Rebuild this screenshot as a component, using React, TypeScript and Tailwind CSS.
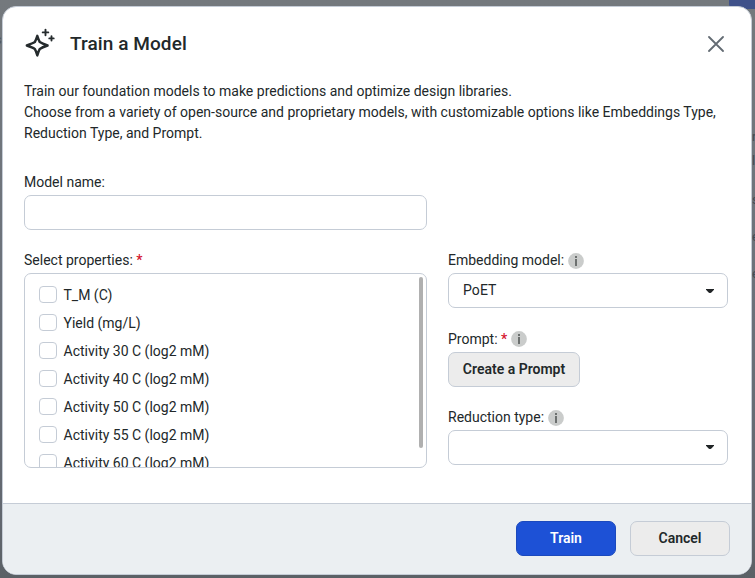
import React from "react";

const properties = [
  "T_M (C)",
  "Yield (mg/L)",
  "Activity 30 C (log2 mM)",
  "Activity 40 C (log2 mM)",
  "Activity 50 C (log2 mM)",
  "Activity 55 C (log2 mM)",
  "Activity 60 C (log2 mM)",
];

function Sparkles() {
  return (
    <svg width="32" height="32" viewBox="0 0 32 32" fill="none" stroke="#252b2d" strokeLinecap="round" strokeLinejoin="round">
      <path d="M13.3 7.8 C14 10 14.8 12.2 15.8 14.1 C17.8 15.4 21 16.6 23.6 17.5 C21 18.4 17.8 19.6 15.8 20.9 C14.8 22.7 14 25 13.3 27.4 C12.6 25 11.8 22.7 10.8 20.9 C8.8 19.6 5.4 18.4 2.8 17.5 C5.4 16.6 8.8 15.4 10.8 14.1 C11.8 12.2 12.6 10 13.3 7.8 Z" strokeWidth="2.4" />
      <path d="M21.5 1.6 V7.2 M18.7 4.4 H24.3 M27.5 8.2 V12.6 M25.3 10.4 H29.7" strokeWidth="1.9" />
    </svg>
  );
}

function Info() {
  return (
    <svg width="16" height="16" viewBox="0 0 16 16">
      <circle cx="8" cy="8" r="7.9" fill="#cacccb" />
      <rect x="7" y="3" width="2" height="2" fill="#6c706f" />
      <rect x="7" y="6" width="2" height="7" fill="#6c706f" />
    </svg>
  );
}

function Label({ children, required, info }: { children: React.ReactNode; required?: boolean; info?: boolean }) {
  return (
    <div className="flex h-[26px] items-center">
      <span>{children}</span>
      {required && <span className="ml-[3.5px] font-medium text-[#d5152e]">*</span>}
      {info && <span className={required ? "ml-[3.5px]" : "ml-1 mt-[2px]"}><Info /></span>}
    </div>
  );
}

function Select({ value }: { value?: string }) {
  return (
    <div className="flex h-[35px] w-[280px] items-center justify-between rounded-[7px] border border-[#c5ccd6] bg-white pl-[14px] pr-[13px]">
      <span className="tracking-[0.1px]">{value}</span>
      <svg width="8" height="4" viewBox="0 0 8 4" className={value ? "" : "mb-[2px]"}>
        <path d="M0 0 H8 V.8 L5.4 3.6 Q4 4.5 2.6 3.6 L0 .8 Z" fill="#202426" />
      </svg>
    </div>
  );
}

export default function App() {
  return (
    <div className="relative h-[578px] w-[755px] overflow-hidden bg-[linear-gradient(180deg,#74797d_0%,#6c727b_50%,#62676f_90%,#5b6166_100%)] font-['Roboto','Liberation_Sans',sans-serif] text-[14px] leading-[21px] text-[#22282a]">
      <div className="absolute left-[729px] top-0 h-[9px] w-[26px] rounded-bl-[5px] bg-[#40528a]" />
      <span className="absolute -left-[5px] top-[29px] text-[13px] text-[#50565b]">s</span>
      <div className="absolute left-[752px] top-[127px] flex flex-col text-[13px] leading-[20px] text-[#454b53]">
        <span className="h-[24px]">r</span>
        <span className="h-[39px]">l</span>
        <span className="h-[37px]">s</span>
        <span className="h-[37px]">e</span>
        <span>e</span>
      </div>
      <div className="relative ml-[2px] mt-[6px] flex h-[569px] w-[750px] flex-col overflow-hidden rounded-[14px] border border-[#c5ccd6] bg-white">
        <header className="flex h-[74px] items-center justify-between pl-[21px] pr-[27px]">
          <div className="flex items-center">
            <Sparkles />
            <h1 className="ml-[14px] text-[19px] font-medium leading-[24px] tracking-[0.08px]">Train a Model</h1>
          </div>
          <svg width="16" height="16" viewBox="0 0 16 16" stroke="#636b73" strokeWidth="1.8" strokeLinecap="round">
            <path d="M1 1 L15 15 M15 1 L1 15" />
          </svg>
        </header>
        <main className="flex grow flex-col px-[21px]">
          <p className="whitespace-nowrap">
            Train our foundation models to make predictions and optimize design libraries.<br />
            Choose from a variety of open-source and proprietary models, with customizable options like Embeddings Type,<br />
            Reduction Type, and Prompt.
          </p>
          <div className="mt-[25px] w-[403px]">
            <Label>Model name:</Label>
            <div className="h-[35px] rounded-[7px] border border-[#c5ccd6]" />
          </div>
          <div className="mt-[17px] flex gap-[21px]">
            <section className="w-[403px]">
              <Label required>Select properties:</Label>
              <div className="flex h-[195px] justify-between overflow-hidden rounded-[7px] border border-[#c5ccd6] pl-[14px] pr-[3px]">
                <div className="flex flex-col pt-[7px]">
                  {properties.map((p) => (
                    <div key={p} className="flex h-[28px] shrink-0 items-center">
                      <span className="mb-[2px] h-[17px] w-[18px] rounded-[4px] border border-[#c5ccd6]" />
                      <span className="ml-[6.5px]">{p}</span>
                    </div>
                  ))}
                </div>
                <div className="mt-[3px] h-[171px] w-[4px] rounded-[2px] bg-[#b0b0b0]" />
              </div>
            </section>
            <section>
              <Label info>Embedding model:</Label>
              <Select value="PoET" />
              <div className="mt-[18px]">
                <Label required info>Prompt:</Label>
                <button className="block h-[35px] w-[132px] rounded-[7px] border border-[#c5ccd6] bg-[#ececec] font-semibold">Create a Prompt</button>
              </div>
              <div className="mt-[17px]">
                <Label info>Reduction type:</Label>
                <Select />
              </div>
            </section>
          </div>
        </main>
        <footer className="flex h-[71px] shrink-0 items-center justify-end gap-[14px] border-t border-[#c5ccd6] bg-[#ebeff2] pb-[1px] pr-[21px] font-semibold">
          <button className="h-[35px] w-[100px] rounded-[7px] border border-[#1b49bd] bg-[#1d51d6] text-white">Train</button>
          <button className="h-[35px] w-[100px] rounded-[7px] border border-[#c5ccd6] bg-[#ececec]">Cancel</button>
        </footer>
      </div>
    </div>
  );
}
